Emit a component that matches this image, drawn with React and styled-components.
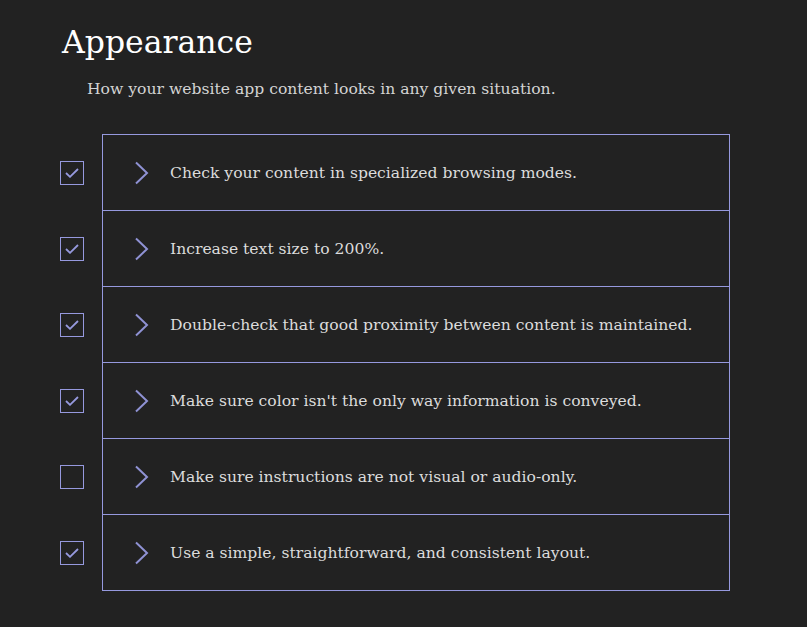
import styled, { createGlobalStyle } from "styled-components";

const GlobalStyle = createGlobalStyle`
  html, body {
    margin: 0;
    background: #222222;
  }
  body {
    font-family: "DejaVu Serif", "Liberation Serif", serif;
    color: #e0e0e0;
  }
`;

const Page = styled.main`
  padding: 20px 0 0 60px;
  width: 807px;
  height: 627px;
  box-sizing: border-box;
`;

const Title = styled.h1`
  margin: 0 0 0 2px;
  font-size: 31.5px;
  font-weight: 400;
  line-height: 44px;
  color: #ffffff;
`;

const Subtitle = styled.p`
  margin: 13px 0 0 27px;
  font-size: 15.6px;
  line-height: 24px;
  color: #d4d4d4;
`;

const List = styled.ul`
  list-style: none;
  margin: 33px 0 0;
  padding: 0;
`;

const Row = styled.li`
  display: flex;
  align-items: stretch;
`;

const CheckCell = styled.div`
  width: 42px;
  display: flex;
  align-items: center;
`;

const Box = styled.span`
  width: 22px;
  height: 22px;
  border: 1px solid #9699de;
  display: flex;
  align-items: center;
  justify-content: center;
`;

const Item = styled.div`
  width: 628px;
  height: ${(p) => (p.$first ? 77 : 76)}px;
  box-sizing: border-box;
  border: 1px solid #9699de;
  border-top: ${(p) => (p.$first ? "1px solid #9699de" : "none")};
  display: flex;
  align-items: center;
  padding-left: 31px;
  padding-top: ${(p) => (p.$first ? 0 : 1)}px;
  gap: 21px;
  font-size: 15.6px;
  color: #dcdcdc;
`;

const Check = () => (
  <svg width="14" height="10" viewBox="0 0 14 10">
    <path d="M1 5 L5 8.8 L13 1" fill="none" stroke="#9699de" strokeWidth="1.8" />
  </svg>
);

const Chevron = () => (
  <svg width="15" height="24" viewBox="0 0 15 24">
    <path d="M2 1.5 L13 12 L2 22.5" fill="none" stroke="#8f92d4" strokeWidth="2" />
  </svg>
);

const items = [
  ["Check your content in specialized browsing modes.", true],
  ["Increase text size to 200%.", true],
  ["Double-check that good proximity between content is maintained.", true],
  ["Make sure color isn't the only way information is conveyed.", true],
  ["Make sure instructions are not visual or audio-only.", false],
  ["Use a simple, straightforward, and consistent layout.", true],
];

export default function App() {
  return (
    <>
      <GlobalStyle />
      <Page>
        <Title>Appearance</Title>
        <Subtitle>How your website app content looks in any given situation.</Subtitle>
        <List>
          {items.map(([text, checked], i) => (
            <Row key={text}>
              <CheckCell>
                <Box>{checked && <Check />}</Box>
              </CheckCell>
              <Item $first={i === 0}>
                <Chevron />
                <span>{text}</span>
              </Item>
            </Row>
          ))}
        </List>
      </Page>
    </>
  );
}
